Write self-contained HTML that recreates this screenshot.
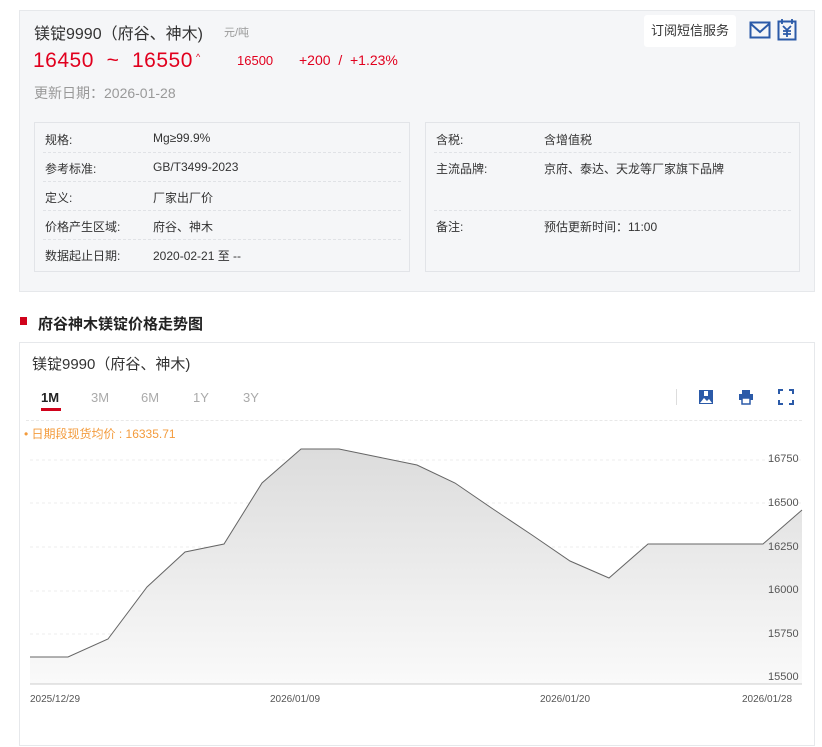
<!DOCTYPE html><html><head><meta charset="utf-8"><style>
body{margin:0;width:822px;height:747px;background:#fff;font-family:"Liberation Sans","Noto Sans CJK SC",sans-serif;position:relative;overflow:hidden}
.a{position:absolute;white-space:nowrap}
.top{position:absolute;left:19px;top:10px;width:794px;height:280px;background:#f5f6f8;border:1px solid #e6e8eb}
.box{position:absolute;top:122px;height:148px;background:#f5f6f8;border:1px solid #e2e4e8}
.row{position:absolute;left:8px;right:8px;height:29px;border-bottom:1px dashed #e0e2e6;font-size:12px;color:#333}
.row span{position:absolute;top:8px}
.chart{position:absolute;left:19px;top:342px;width:794px;height:402px;border:1px solid #e6e8eb}
.yl{font-size:11px;color:#555}
.xl{font-size:10px;color:#555}
</style></head><body>
<div class="top"></div>
<div class="a" style="left:34px;top:20px;font-size:16px;color:#333">镁锭9990（府谷、神木)</div>
<div class="a" style="left:224px;top:24px;font-size:11px;color:#999">元/吨</div>
<div class="a" style="left:33px;top:49px;font-size:21px;color:#e1001e;letter-spacing:0.5px">16450 &nbsp;~ &nbsp;16550</div>
<div class="a" style="left:196px;top:52px;font-size:9px;color:#e1001e">^</div>
<div class="a" style="left:237px;top:53px;font-size:13px;color:#e1001e">16500</div>
<div class="a" style="left:299px;top:52px;font-size:14px;color:#e1001e">+200 &nbsp;/ &nbsp;+1.23%</div>
<div class="a" style="left:34px;top:83px;font-size:14px;color:#999">更新日期：2026-01-28</div>
<div class="a" style="left:644px;top:15px;width:92px;height:32px;background:#fff;border-radius:3px;font-size:13px;color:#333;line-height:32px;text-align:center">订阅短信服务</div>
<svg class="a" style="left:749px;top:21px" width="22" height="18"><rect x="1.5" y="1.5" width="19" height="15" fill="none" stroke="#2b5aa8" stroke-width="2"/><path d="M2 3L11 11L20 3" fill="none" stroke="#2b5aa8" stroke-width="2"/></svg>
<svg class="a" style="left:777px;top:18px" width="20" height="23"><rect x="1.5" y="3.5" width="17" height="18" fill="none" stroke="#2b5aa8" stroke-width="2"/><path d="M5 1v5M15 1v5M6 8l4 4 4-4M10 12v7M6 13h8M6 16h8" fill="none" stroke="#2b5aa8" stroke-width="1.8"/></svg>
<div class="box" style="left:34px;width:374px">
<div class="row" style="top:0"><span style="left:2px">规格:</span><span style="left:110px">Mg≥99.9%</span></div>
<div class="row" style="top:29px"><span style="left:2px">参考标准:</span><span style="left:110px">GB/T3499-2023</span></div>
<div class="row" style="top:58px"><span style="left:2px">定义:</span><span style="left:110px">厂家出厂价</span></div>
<div class="row" style="top:87px"><span style="left:2px">价格产生区域:</span><span style="left:110px">府谷、神木</span></div>
<div class="row" style="top:116px;border:none"><span style="left:2px">数据起止日期:</span><span style="left:110px">2020-02-21 至 --</span></div>
</div>
<div class="box" style="left:425px;width:373px">
<div class="row" style="top:0"><span style="left:2px">含税:</span><span style="left:110px">含增值税</span></div>
<div class="row" style="top:29px;height:58px"><span style="left:2px">主流品牌:</span><span style="left:110px">京府、泰达、天龙等厂家旗下品牌</span></div>
<div class="row" style="top:87px;border:none"><span style="left:2px">备注:</span><span style="left:110px">预估更新时间：11:00</span></div>
</div>
<div class="a" style="left:20px;top:317px;width:7px;height:8px;background:#d0021b"></div>
<div class="a" style="left:38px;top:313px;font-size:15px;font-weight:bold;color:#222">府谷神木镁锭价格走势图</div>
<div class="chart"></div>
<div class="a" style="left:32px;top:353px;font-size:15px;color:#333">镁锭9990（府谷、神木)</div>
<div class="a" style="left:41px;top:390px;font-size:13px;font-weight:bold;color:#222">1M</div>
<div class="a" style="left:41px;top:408px;width:20px;height:3px;background:#d0021b"></div>
<div class="a" style="left:91px;top:390px;font-size:13px;color:#aaa">3M</div>
<div class="a" style="left:141px;top:390px;font-size:13px;color:#aaa">6M</div>
<div class="a" style="left:193px;top:390px;font-size:13px;color:#aaa">1Y</div>
<div class="a" style="left:243px;top:390px;font-size:13px;color:#aaa">3Y</div>
<div class="a" style="left:676px;top:389px;width:1px;height:16px;background:#ddd"></div>
<svg class="a" style="left:698px;top:389px" width="16" height="16"><rect x="1" y="1" width="14" height="14" fill="#2b5aa8"/><path d="M2 14l4-5 3 3 2-2 3 4z" fill="#fff"/><rect x="6" y="2" width="4" height="5" fill="#fff"/></svg>
<svg class="a" style="left:738px;top:389px" width="16" height="16"><rect x="4" y="1" width="8" height="4" fill="#2b5aa8"/><rect x="1" y="5" width="14" height="6" fill="#2b5aa8"/><rect x="4" y="9" width="8" height="6" fill="#fff" stroke="#2b5aa8" stroke-width="1.5"/></svg>
<svg class="a" style="left:778px;top:389px" width="16" height="16"><path d="M1 5V1h4M11 1h4v4M15 11v4h-4M5 15H1v-4" fill="none" stroke="#2b5aa8" stroke-width="2"/></svg>
<div class="a" style="left:26px;top:420px;width:776px;border-top:1px dashed #e8e8e8"></div>
<div class="a" style="left:24px;top:425px;font-size:12px;color:#f39b3c">• 日期段现货均价 : 16335.71</div>
<svg class="a" style="left:0;top:0" width="822" height="747">
<defs><linearGradient id="g" x1="0" y1="0" x2="0" y2="1"><stop offset="0" stop-color="#dcdcdc"/><stop offset="1" stop-color="#fafafa"/></linearGradient></defs>
<g stroke="#eee" stroke-dasharray="3,3"><line x1="30" x2="802" y1="460" y2="460"/><line x1="30" x2="802" y1="503" y2="503"/><line x1="30" x2="802" y1="547" y2="547"/><line x1="30" x2="802" y1="591" y2="591"/><line x1="30" x2="802" y1="634" y2="634"/></g>
<path d="M30 657L68 657L108 639L147 587L185 552L224 544L262 483L301 449L339 449L378 457L417 465L455 483L493 509L532 535L570 561L609 578L648 544L763 544L802 510L802 684L30 684Z" fill="url(#g)"/>
<path d="M30 657L68 657L108 639L147 587L185 552L224 544L262 483L301 449L339 449L378 457L417 465L455 483L493 509L532 535L570 561L609 578L648 544L763 544L802 510" fill="none" stroke="#666" stroke-width="1"/>
<line x1="30" x2="802" y1="684" y2="684" stroke="#ccc"/>
</svg>
<div class="a yl" style="left:768px;top:453px">16750</div>
<div class="a yl" style="left:768px;top:497px">16500</div>
<div class="a yl" style="left:768px;top:541px">16250</div>
<div class="a yl" style="left:768px;top:584px">16000</div>
<div class="a yl" style="left:768px;top:628px">15750</div>
<div class="a yl" style="left:768px;top:671px">15500</div>
<div class="a xl" style="left:30px;top:694px">2025/12/29</div>
<div class="a xl" style="left:270px;top:694px">2026/01/09</div>
<div class="a xl" style="left:540px;top:694px">2026/01/20</div>
<div class="a xl" style="left:742px;top:694px">2026/01/28</div>
</body></html>
